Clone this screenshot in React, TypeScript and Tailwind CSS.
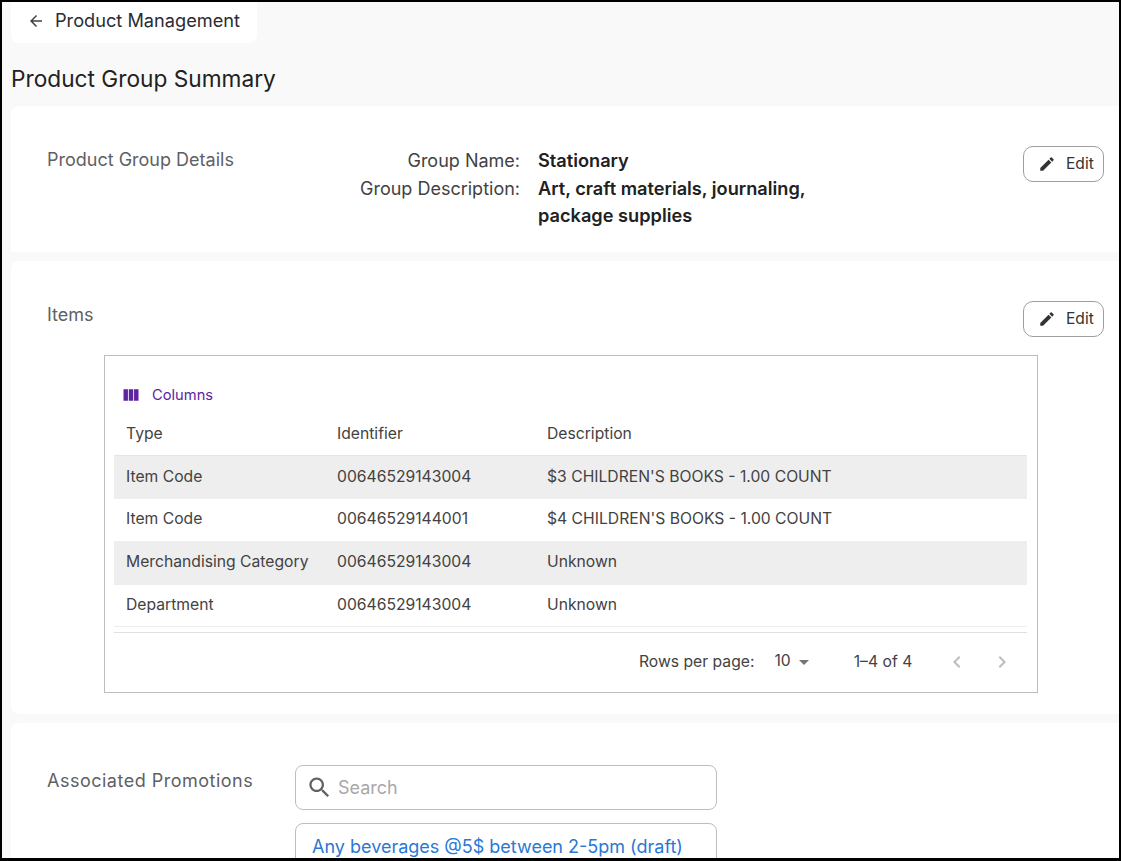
import React from 'react';

const Icon = ({ d, className }: { d: string; className: string }) => (
  <svg viewBox="0 0 24 24" fill="currentColor" className={className}>
    <path d={d} />
  </svg>
);

const EDIT = 'M3 17.25V21h3.75L17.81 9.94l-3.75-3.75L3 17.25zM20.71 7.04c.39-.39.39-1.02 0-1.41l-2.34-2.34a.9959.9959 0 0 0-1.41 0l-1.83 1.83 3.75 3.75 1.83-1.83z';
const BACK = 'M20 11H7.83l5.59-5.59L12 4l-8 8 8 8 1.41-1.41L7.83 13H20v-2z';
const COLUMNS = 'M14.67 5v14H9.33V5h5.34zm1 14H21V5h-5.33v14zm-7.34 0V5H3v14h5.33z';
const SEARCH = 'M15.5 14h-.79l-.28-.27C15.41 12.59 16 11.11 16 9.5 16 5.91 13.09 3 9.5 3S3 5.91 3 9.5 5.91 16 9.5 16c1.61 0 3.09-.59 4.23-1.57l.27.28v.79l5 4.99L20.49 19l-4.99-5zm-6 0C7.01 14 5 11.99 5 9.5S7.01 5 9.5 5 14 7.01 14 9.5 11.99 14 9.5 14z';
const DROP = 'M7 10l5 5 5-5z';
const LEFT = 'M15.41 7.41L14 6l-6 6 6 6 1.41-1.41L10.83 12z';
const RIGHT = 'M10 6L8.59 7.41 13.17 12l-4.58 4.59L10 18l6-6z';

const rows = [
  { type: 'Item Code', id: '00646529143004', desc: "$3 CHILDREN'S BOOKS - 1.00 COUNT", shade: true, h: 'h-[43px]' },
  { type: 'Item Code', id: '00646529144001', desc: "$4 CHILDREN'S BOOKS - 1.00 COUNT", shade: false, h: 'h-[43px] pb-[2px]' },
  { type: 'Merchandising Category', id: '00646529143004', desc: 'Unknown', shade: true, h: 'h-[43px] pb-[2px]' },
  { type: 'Department', id: '00646529143004', desc: 'Unknown', shade: false, h: 'h-[42px] pb-[1px]' },
];

const EditButton = () => (
  <button className="flex h-[36px] w-[81px] items-center rounded-[10px] border border-[#9e9e9e] bg-white pl-[14px] text-[15.6px] text-[#333333]">
    <Icon d={EDIT} className="h-[18px] w-[18px] text-[#333333]" />
    <span className="ml-[10px]">Edit</span>
  </button>
);

export default function App() {
  return (
    <div className="h-[861px] w-[1121px] overflow-hidden border-x-2 border-t-2 border-b-[3px] border-black bg-[#f9f9f9] font-['Inter',sans-serif] text-[#212121]">
      {/* Back tab */}
      <div className="ml-[9px] flex h-[41px] w-[246px] items-center rounded-b-lg bg-white pb-[3px] pl-[16px] text-[18.2px] text-[#2b2b33]">
        <Icon d={BACK} className="h-[18px] w-[18px] text-[#424242]" />
        <span className="ml-[10px]">Product Management</span>
      </div>

      <h1 className="ml-[9px] mt-[21px] h-[42px] text-[22.7px] leading-[30px] text-[#212121]">Product Group Summary</h1>

      {/* Details card */}
      <section className="ml-[9px] flex h-[146px] rounded-tl-lg bg-white">
        <div className="w-[295px] pl-[36px] pt-[43px] text-[18px] leading-[22px] text-[#5f5f66]">Product Group Details</div>
        <div className="flex pt-[41px] text-[18px] leading-[27.5px]">
          <div className="w-[214px] text-right text-[#424242]">
            <div>Group Name:</div>
            <div>Group Description:</div>
          </div>
          <div className="ml-[18px] w-[300px] text-[18.2px] font-semibold text-[#212121]">
            <div>Stationary</div>
            <div>Art, craft materials, journaling, package supplies</div>
          </div>
        </div>
        <div className="ml-auto mr-[15px] pt-[40px]">
          <EditButton />
        </div>
      </section>

      {/* Items card */}
      <section className="ml-[9px] mt-[9px] h-[453px] rounded-l-lg bg-white">
        <div className="flex h-[94px] justify-between pr-[15px]">
          <div className="pl-[36px] pt-[43px] text-[18px] leading-[22px] text-[#5f5f66]">Items</div>
          <div className="pt-[40px]">
            <EditButton />
          </div>
        </div>
        <div className="ml-[93px] h-[338px] w-[934px] border border-[#bdbdbd] pl-[9px] pr-[10px]">
          <div className="flex h-[58px] items-end pb-[9px] pl-[7px] text-[14.7px] leading-[20px] text-[#5e249f]">
            <Icon d={COLUMNS} className="h-[20px] w-[20px]" />
            <span className="ml-[11px]">Columns</span>
          </div>
          <div className="flex h-[42px] items-center border-b border-[#e5e5e5] pb-[2px] text-[15.7px] text-[#424242]">
            <div className="w-[211px] pl-[12px]">Type</div>
            <div className="w-[210px] pl-[12px]">Identifier</div>
            <div className="pl-[12px]">Description</div>
          </div>
          {rows.map((row, i) => (
            <div key={i} className={`flex ${row.h} items-center border-b border-[#eeeeee] text-[15.7px] text-[#424242] ${row.shade ? 'bg-[#eeeeee]' : 'bg-white'}`}>
              <div className="w-[211px] pl-[12px]">{row.type}</div>
              <div className="w-[210px] pl-[12px]">{row.id}</div>
              <div className="pl-[12px]">{row.desc}</div>
            </div>
          ))}
          <div className="mt-[5px] flex h-[59px] items-center border-t border-[#e0e0e0] text-[15.7px] text-[#424242]">
            <span className="ml-[525px]">Rows per page:</span>
            <span className="ml-[20px] -translate-y-px">10</span>
            <Icon d={DROP} className="ml-[1px] h-[24px] w-[24px] text-[#757575]" />
            <span className="ml-[38px]">1–4 of 4</span>
            <Icon d={LEFT} className="ml-[33px] h-[24px] w-[24px] text-[#bdbdbd]" />
            <Icon d={RIGHT} className="ml-[21px] h-[24px] w-[24px] text-[#bdbdbd]" />
          </div>
        </div>
      </section>

      {/* Promotions card */}
      <section className="ml-[9px] mt-[9px] flex h-[200px] rounded-tl-lg bg-white">
        <div className="w-[284px] pl-[36px] pt-[47px] text-[18px] leading-[22px] tracking-[0.5px] text-[#5f5f66]">Associated Promotions</div>
        <div className="pt-[42px]">
          <div className="flex h-[45px] w-[422px] items-center rounded-lg border border-[#bdbdbd] pl-[10px] text-[18px] text-[#a8a8a8]">
            <Icon d={SEARCH} className="h-[27px] w-[27px] text-[#616161]" />
            <span className="ml-[5px]">Search</span>
          </div>
          <div className="mt-[13px] h-[80px] w-[422px] rounded-lg border border-[#bdbdbd] pl-[16px] pt-[11px] text-[18px] leading-[24px] text-[#2a78d6]">
            Any beverages @5$ between 2-5pm (draft)
          </div>
        </div>
      </section>
    </div>
  );
}
